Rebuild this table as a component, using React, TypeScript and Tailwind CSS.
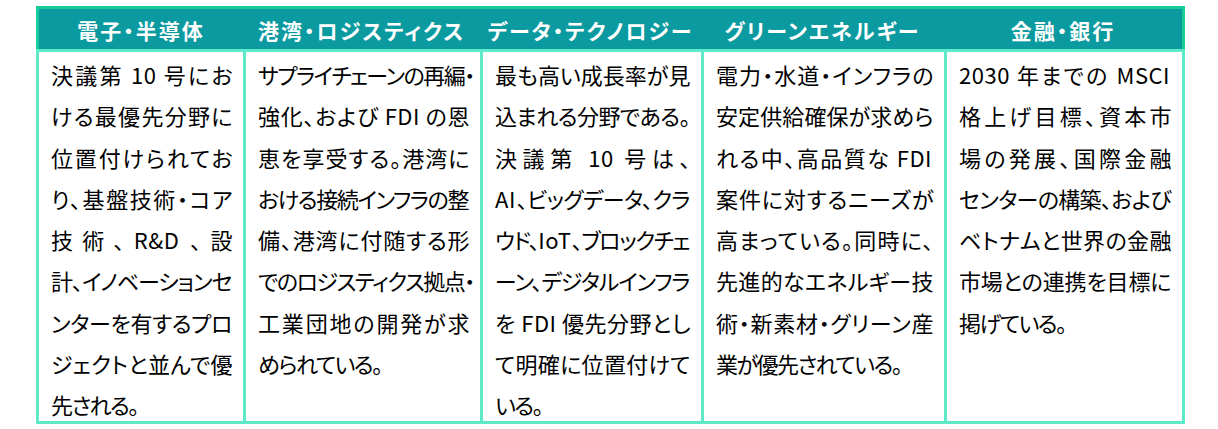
import React from 'react';

type Column = {
  title: string;
  lines: string[];
};

const columns: Column[] = [
  {
    title: '電子・半導体',
    lines: [
      '決議第 10 号にお',
      'ける最優先分野に',
      '位置付けられてお',
      'り、基盤技術・コア',
      '技術、R&D、設',
      '計、イノベーションセ',
      'ンターを有するプロ',
      'ジェクトと並んで優',
      '先される。',
    ],
  },
  {
    title: '港湾・ロジスティクス',
    lines: [
      'サプライチェーンの再編・',
      '強化、および FDI の恩',
      '恵を享受する。港湾に',
      'おける接続インフラの整',
      '備、港湾に付随する形',
      'でのロジスティクス拠点・',
      '工業団地の開発が求',
      'められている。',
    ],
  },
  {
    title: 'データ・テクノロジー',
    lines: [
      '最も高い成長率が見',
      '込まれる分野である。',
      '決議第 10 号は、',
      'AI、ビッグデータ、クラ',
      'ウド、IoT、ブロックチェ',
      'ーン、デジタルインフラ',
      'を FDI 優先分野とし',
      'て明確に位置付けて',
      'いる。',
    ],
  },
  {
    title: 'グリーンエネルギー',
    lines: [
      '電力・水道・インフラの',
      '安定供給確保が求めら',
      'れる中、高品質な FDI',
      '案件に対するニーズが',
      '高まっている。同時に、',
      '先進的なエネルギー技',
      '術・新素材・グリーン産',
      '業が優先されている。',
    ],
  },
  {
    title: '金融・銀行',
    lines: [
      '2030 年までの MSCI',
      '格上げ目標、資本市',
      '場の発展、国際金融',
      'センターの構築、および',
      'ベトナムと世界の金融',
      '市場との連携を目標に',
      '掲げている。',
    ],
  },
];

// 英数字だけは字間を詰めない
const renderLine = (line: string) =>
  line.split(/([A-Za-z0-9&]+)/).map((part, i) =>
    /^[A-Za-z0-9&]+$/.test(part) ? (
      <span key={i} className="tracking-[0.5px]">
        {part}
      </span>
    ) : (
      part
    ),
  );

const App: React.FC = () => {
  return (
    <div className="min-h-[429px] bg-white pl-[36px] pt-[6px] font-['Noto_Sans_CJK_JP',sans-serif]">
      <div className="w-[1149px]">
        {/* ヘッダー行 */}
        <div className="grid h-[43px] grid-cols-[204px_237px_221px_243px_238px] border-[3px] border-b-0 border-[#16cc98] bg-[#0a9aa0]">
          {columns.map((col) => (
            <div
              key={col.title}
              className="flex items-center justify-center pt-[3px] text-[21px] font-bold tracking-[2px] text-white [font-feature-settings:'palt']"
            >
              {col.title}
            </div>
          ))}
        </div>

        {/* 本文：行ごとに両端揃え */}
        <div className="grid grid-cols-[204px_237px_221px_243px_238px] border-[3px] border-[#5ee9c9]">
          {columns.map((col, ci) => (
            <div
              key={col.title}
              className={`h-[369px] overflow-hidden px-3 pt-[2px] text-[22px] leading-[41.3px] tracking-[-1.5px] text-black [font-feature-settings:'palt'] ${
                ci > 0 ? 'border-l-[3px] border-[#5ee9c9]' : ''
              }`}
            >
              {col.lines.map((line, li) => (
                <div
                  key={li}
                  className={
                    li < col.lines.length - 1
                      ? 'whitespace-nowrap text-justify [text-align-last:justify]'
                      : 'whitespace-nowrap'
                  }
                >
                  {renderLine(line)}
                </div>
              ))}
            </div>
          ))}
        </div>
      </div>
    </div>
  );
};

export default App;
